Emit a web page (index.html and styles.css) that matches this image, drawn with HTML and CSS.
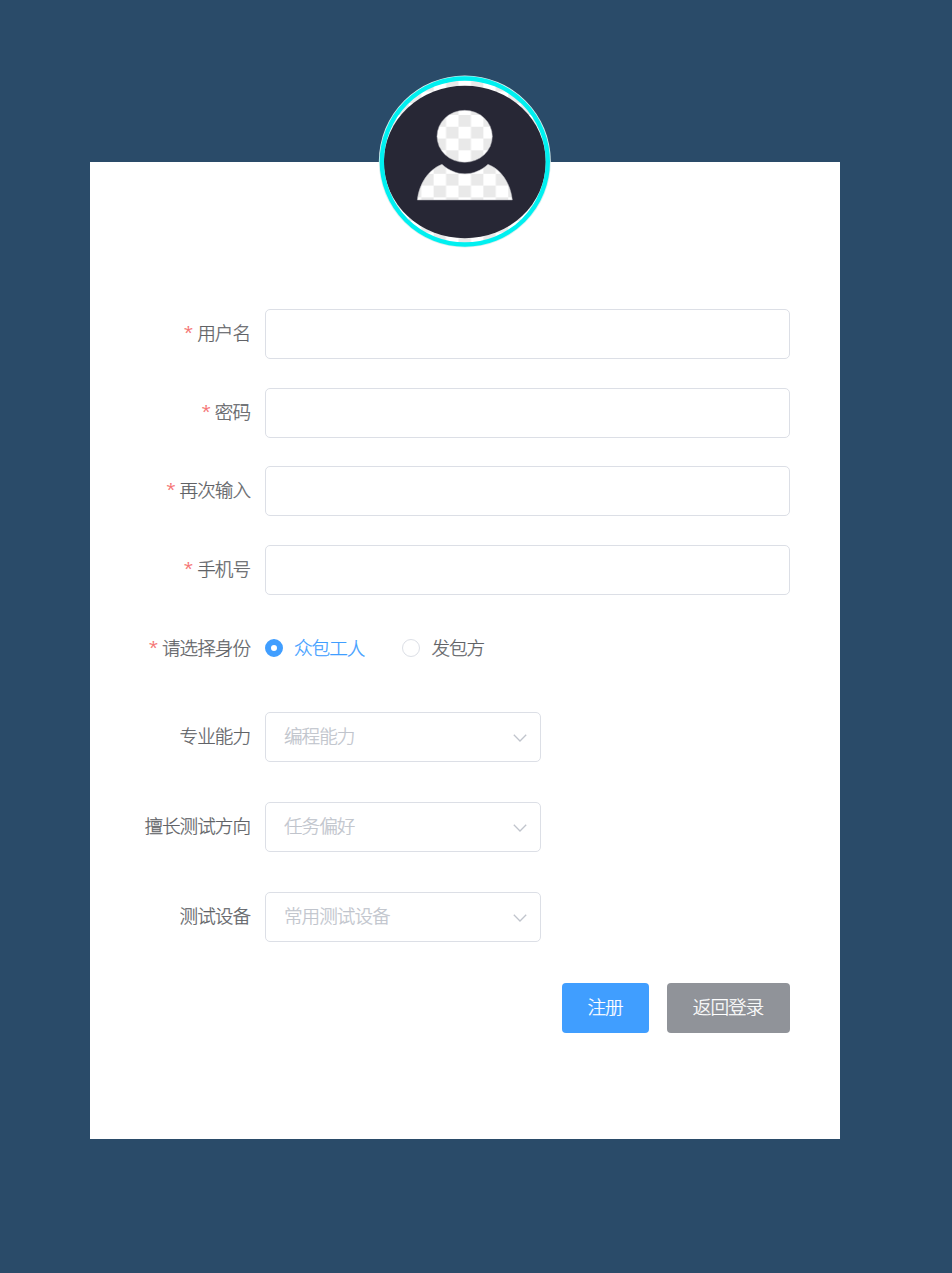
FILE: index.html
```html
<!DOCTYPE html>
<html lang="zh-CN">
<head>
<meta charset="utf-8">
<title>注册</title>
<link rel="stylesheet" href="styles.css">
</head>
<body>
<main class="card">
  <svg class="avatar" viewBox="0 0 570 570" aria-hidden="true">
    <defs>
      <pattern id="checks" x="265.5" y="150" width="74.6" height="70.6" patternUnits="userSpaceOnUse">
        <rect width="74.6" height="70.6" fill="#fff"/>
        <rect width="37.3" height="35.3" fill="#e9e9e9"/>
        <rect x="37.3" y="35.3" width="37.3" height="35.3" fill="#e9e9e9"/>
      </pattern>
    </defs>
    <circle cx="284.5" cy="289.5" r="258" fill="#d9eeee"/>
    <circle cx="284.5" cy="289.5" r="248" fill="url(#checks)"/>
    <ellipse cx="284.5" cy="291" rx="243" ry="229" fill="#272735"/>
    <circle cx="284.5" cy="289.5" r="249" fill="none" stroke="#00f0f0" stroke-width="13"/>
    <ellipse cx="284" cy="214" rx="83" ry="78" fill="url(#checks)" stroke="#aaaab0" stroke-width="1.5"/>
    <path d="M142 405C147 356 176 313 216 298C258 336 312 336 354 298C394 313 422 356 427 405Z" fill="url(#checks)" stroke="#aaaab0" stroke-width="1.5"/>
  </svg>
  <form class="form">
    <div class="row"><label class="label required">用户名</label><input class="input" type="text"></div>
    <div class="row"><label class="label required">密码</label><input class="input" type="password"></div>
    <div class="row"><label class="label required">再次输入</label><input class="input" type="password"></div>
    <div class="row"><label class="label required">手机号</label><input class="input" type="text"></div>
    <div class="row row-radio">
      <span class="label required">请选择身份</span>
      <span class="radio checked"><i class="dot"></i><span class="text">众包工人</span></span>
      <span class="radio"><i class="dot"></i><span class="text">发包方</span></span>
    </div>
    <div class="row row-select"><span class="label">专业能力</span><div class="select"><span class="text">编程能力</span><svg class="arrow" viewBox="0 0 14 8"><path d="M.8.8 7 7 13.2.8"/></svg></div></div>
    <div class="row row-select"><span class="label">擅长测试方向</span><div class="select"><span class="text">任务偏好</span><svg class="arrow" viewBox="0 0 14 8"><path d="M.8.8 7 7 13.2.8"/></svg></div></div>
    <div class="row row-select"><span class="label">测试设备</span><div class="select"><span class="text">常用测试设备</span><svg class="arrow" viewBox="0 0 14 8"><path d="M.8.8 7 7 13.2.8"/></svg></div></div>
    <div class="actions">
      <button class="button primary" type="button">注册</button>
      <button class="button info" type="button">返回登录</button>
    </div>
  </form>
</main>
</body>
</html>
```
FILE: styles.css
```css
* { box-sizing: border-box; }
body {
  margin: 0;
  min-height: 1273px;
  padding: 161.8px 0 0 90px;
  background: #2a4b69;
  color: #606266;
  font: 300 18.6px/46px "Noto Sans CJK SC", sans-serif;
  letter-spacing: -1px;
  -webkit-text-stroke: .25px currentColor;
}
.card {
  position: relative;
  width: 750px;
  height: 976.8px;
  padding: 147.1px 50px 0 25px;
  background: #fff;
}
.avatar {
  position: absolute;
  left: 280px;
  top: -96.8px;
  width: 190px;
  height: 190px;
}
.form { display: flex; flex-direction: column; }
.row { display: flex; height: 50px; margin-bottom: 28.7px; }
.row-radio { margin-bottom: 38.5px; }
.row-select { margin-bottom: 40px; }
.label {
  width: 150px;
  padding-right: 15px;
  text-align: right;
  white-space: nowrap;
}
.required::before {
  content: "*";
  margin-right: 5px;
  color: #f56c6c;
  font-family: "Noto Sans", sans-serif;
  font-size: 17px;
  line-height: 1;
  vertical-align: 2px;
}
.input {
  flex: 1;
  min-width: 0;
  height: 50px;
  padding: 0 19px;
  border: 1px solid #dcdfe6;
  border-radius: 5px;
  background: #fff;
  font: inherit;
  outline: none;
}
.radio { display: flex; align-items: center; height: 49px; margin-right: 38px; }
.dot {
  width: 18px;
  height: 18px;
  margin-right: 11px;
  border: 1px solid #dcdfe6;
  border-radius: 50%;
}
.text { padding-bottom: 3px; }
.checked { color: #409eff; }
.checked .dot { border: 6.2px solid #409eff; }
.select {
  display: flex;
  align-items: center;
  justify-content: space-between;
  width: 276px;
  height: 50px;
  padding: 0 13px 0 18px;
  border: 1px solid #dcdfe6;
  border-radius: 5px;
  color: #c0c4cc;
}
.select .text { padding-bottom: 4px; }
.arrow {
  width: 14px;
  height: 8px;
  margin-top: 1px;
  fill: none;
  stroke: #c0c4cc;
  stroke-width: 1.3;
}
.actions { display: flex; justify-content: flex-end; gap: 18px; padding-top: 1px; }
.button {
  height: 50px;
  padding: 0 1px 4px 0;
  border: 0;
  border-radius: 4px;
  color: #fff;
  font: inherit;
  letter-spacing: inherit;
  line-height: 46px;
}
.primary { width: 87px; background: #409eff; }
.info { width: 123px; background: #909399; }
```
